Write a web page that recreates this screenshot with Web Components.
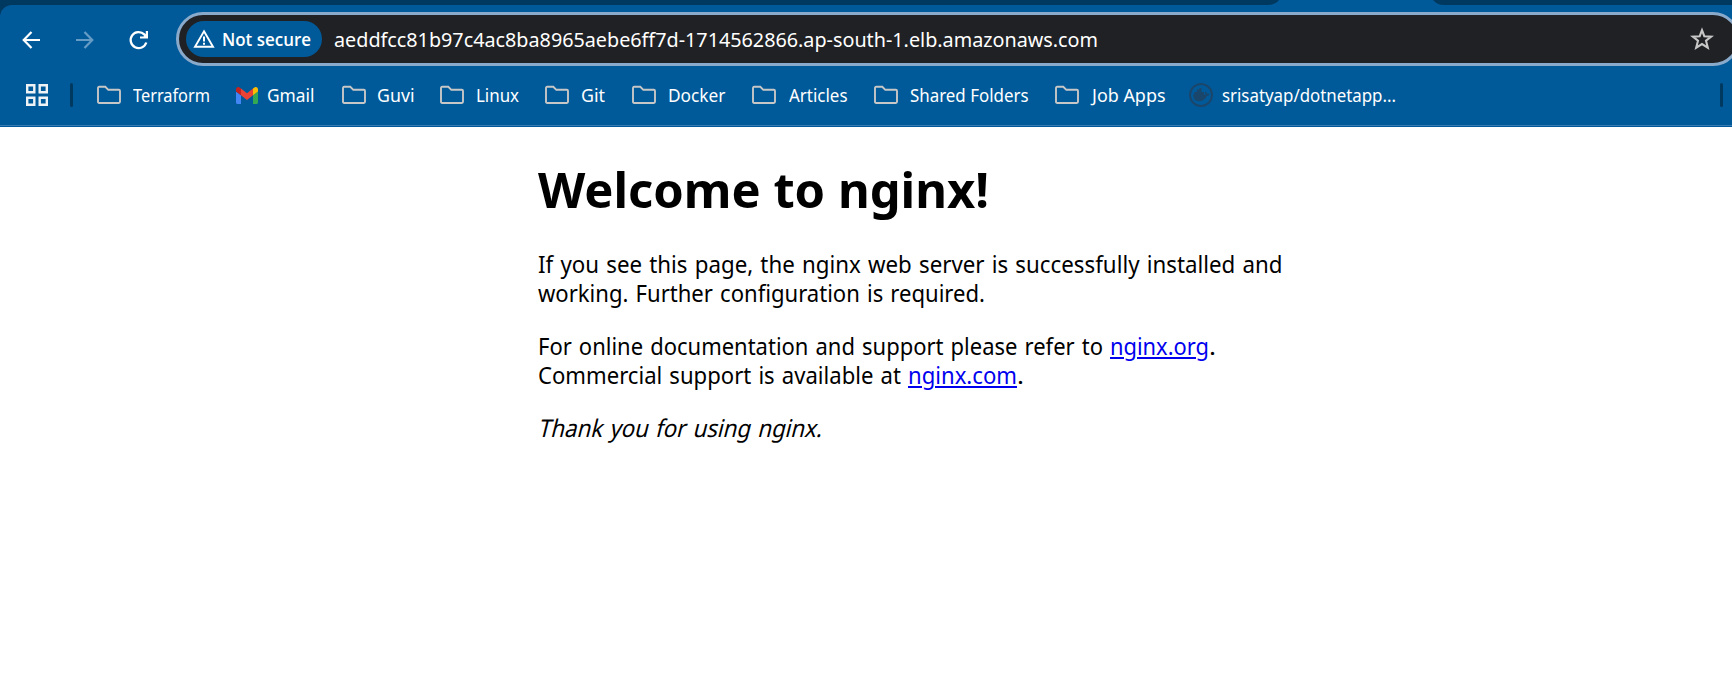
<!DOCTYPE html>
<html lang="en">
<head>
<meta charset="utf-8">
<title>Welcome to nginx!</title>
<style>
html,body{margin:0;padding:0;background:#fff}
body{width:1732px;height:681px;overflow:hidden}
</style>
</head>
<body>
<browser-window></browser-window>
<script>
// Text run scaled horizontally so that it occupies a given advance width.
class FitText extends HTMLElement {
  constructor(){
    super();
    this.attachShadow({mode:'open'}).innerHTML = '<style>:host{display:inline-block;white-space:pre;line-height:inherit}span{display:inline-block;transform-origin:0 77%;text-decoration:var(--line,none);text-decoration-thickness:2px;text-underline-offset:2px}</style><span><slot></slot></span>';
  }
  connectedCallback(){
    const target = parseFloat(this.getAttribute('w'));
    const span = this.shadowRoot.querySelector('span');
    const w = span.getBoundingClientRect().width;
    const skew = this.hasAttribute('slant') ? 'skewX(-' + this.getAttribute('slant') + 'deg) ' : '';
    if (w) span.style.transform = skew + 'scaleX(' + (target / w).toFixed(5) + ')';
    this.style.width = target + 'px';
  }
}

class TabStrip extends HTMLElement {
  constructor(){
    super();
    this.attachShadow({mode:'open'}).innerHTML = `
<style>:host{display:flex;height:5px;background:#005a9a;justify-content:space-between}
svg{display:block}</style>
<svg width="1280" height="5"><path d="M0 0H1279Q1275 5 1268 5H0Z" fill="#00395f"/></svg>
<svg width="300" height="5"><path d="M1 0H300V5H12Q5 5 1 0Z" fill="#00395f"/></svg>`;
  }
}

class NavBar extends HTMLElement {
  constructor(){
    super();
    this.attachShadow({mode:'open'}).innerHTML = `
<style>
:host{display:flex;height:61px;background:linear-gradient(#00395f,#00395f) 0 0/12px 12px no-repeat}
.in{display:flex;flex:1;background:#005a9a;border-radius:12px 0 0 0;min-width:0}
.nav{display:flex;width:176px;padding-top:21px;box-sizing:border-box;flex:none}
svg{display:block;flex:none}
.nav svg:nth-child(1){margin-left:16px}
.nav svg:nth-child(n+2){margin-left:24px}
.pill{flex:none;width:1564px;height:54px;margin-top:7px;box-sizing:border-box;border:3px solid #8aaacb;border-radius:27px;background:#202124;display:flex;align-items:center;padding-left:6.5px}
.chip{width:136.5px;height:36px;border-radius:18px;background:#005a9a;display:flex;align-items:center;box-sizing:border-box;padding-left:7px;color:#fff;font:600 17.7px/36px "Open Sans",sans-serif}
.chip fit-text{margin-left:7px}
.url{color:#fff;font:20.7px/48px "Noto Sans",sans-serif;margin-left:11.5px}
.star{margin-left:592px}
</style>
<div class="in">
<div class="nav">
<svg width="30" height="30" viewBox="0 0 30 30" fill="none" stroke="#fff" stroke-width="2.2"><path d="M24 14H8M15.500 5.900L7.700 14L15.500 22.100"/></svg>
<svg width="30" height="30" viewBox="0 0 30 30" fill="none" stroke="#659cc5" stroke-width="2.2"><path d="M6 14H22M14.500 5.900L22.300 14L14.500 22.100"/></svg>
<svg width="30" height="30" viewBox="0 0 30 30" fill="none" stroke="#fff" stroke-width="2.3"><path d="M22.300 16.500A8 8 0 1 1 20.300 8.400L22 10.300"/><path d="M24 5V12.500H16V10.500H19.500L21.800 8.200V5Z" fill="#fff" stroke="none"/></svg>
</div>
<div class="pill">
<div class="chip"><svg width="22" height="20" viewBox="0 0 22 20"><path d="M11 2.300L20 17.700H2Z" fill="none" stroke="#fff" stroke-width="1.9"/><path d="M10 7.500h2v5h-2zM10 13.700h2v2h-2z" fill="#fff"/></svg><fit-text w="89">Not secure</fit-text></div>
<div class="url"><fit-text w="764">aeddfcc81b97c4ac8ba8965aebe6ff7d-1714562866.ap-south-1.elb.amazonaws.com</fit-text></div>
<svg class="star" width="24" height="24" viewBox="0 0 24 24"><path d="M12 3.200L14.300 9.200L21.200 9.600L16 13.700L17.800 20.600L12 17L6.200 20.600L8 13.700L2.800 9.600L9.700 9.200Z" fill="none" stroke="#c7c7c7" stroke-width="2.1"/></svg>
</div></div>`;
  }
}

const ICONS = {
  folder: '<svg width="24" height="20" viewBox="0 0 24 20"><path d="M1 16.800V3Q1 1.800 2.200 1.800H8.300L11.300 4.800H21.800Q23 4.800 23 6V16.800Q23 18 21.800 18H2.200Q1 18 1 16.800Z" fill="none" stroke="#c7c7c7" stroke-width="1.9"/></svg>',
  gmail: '<svg width="22" height="17" viewBox="52 42 88 66" preserveAspectRatio="none"><path fill="#4285f4" d="M58 108h14V74L52 59v43c0 3.320 2.690 6 6 6"/><path fill="#34a853" d="M120 108h14c3.320 0 6-2.690 6-6V59l-20 15"/><path fill="#fbbc04" d="M120 48v26l20-15v-8c0-7.420-8.470-11.650-14.400-7.200"/><path fill="#ea4335" d="M72 74V48l24 18 24-18v26L96 92"/><path fill="#c5221f" d="M52 51v8l20 15V48l-5.600-4.200c-5.940-4.450-14.400-.22-14.400 7.200"/></svg>',
  docker: '<svg width="24" height="24" viewBox="0 0 24 24"><circle cx="12" cy="12" r="11" fill="none" stroke="#1b466b" stroke-width="2"/><path fill="#1b466b" d="M4 11.500H16.400Q16.500 10.200 15.700 9.300L16.600 8.400Q18 9.500 18 10.700Q19.600 10.400 20.600 11.200Q19.800 12.900 17.800 12.900Q15.500 18.300 10 18.300Q4.300 18.300 4 11.500ZM5.300 8.900H15V11.700H5.300zM7.800 6.500h4.700v2.400H7.800zM10.300 5h2.200v1.500h-2.200z"/></svg>'
};

class BookmarkItem extends HTMLElement {
  connectedCallback(){
    if (this.shadowRoot) return;
    const a = n => this.getAttribute(n);
    this.attachShadow({mode:'open'}).innerHTML = `
<style>:host{display:flex;flex:none;align-items:center;height:36px;box-sizing:border-box;color:#fff;font:17.6px/36px "Noto Sans",sans-serif}
svg{display:block;flex:none}</style>${ICONS[a('icon')]}<fit-text w="${a('w')}">${a('label')}</fit-text>`;
    this.shadowRoot.querySelector('fit-text').style.marginLeft = a('gap') + 'px';
  }
}

// label, icon, left edge, text start, text width
const BOOKMARKS = [
  ['Terraform','folder',97,133,77],
  ['Gmail','gmail',236,267.200,47.500],
  ['Guvi','folder',342,376.700,37.500],
  ['Linux','folder',440,476,43],
  ['Git','folder',545,581,24],
  ['Docker','folder',632,668,57.500],
  ['Articles','folder',752,789,58.500],
  ['Shared Folders','folder',874,910,118.500],
  ['Job Apps','folder',1055,1092,73.500],
  ['srisatyap/dotnetapp...','docker',1189,1222,174]
];

class BookmarksBar extends HTMLElement {
  constructor(){
    super();
    let x = 73, items = '';
    for (const [label, icon, left, text, w] of BOOKMARKS) {
      const iw = icon === 'gmail' ? 22 : 24;
      items += `<bookmark-item icon="${icon}" label="${label}" w="${w}" gap="${text-left-iw}" style="margin-left:${left-x}px"></bookmark-item>`;
      x = text + w;
    }
    this.attachShadow({mode:'open'}).innerHTML = `
<style>:host{display:flex;height:61px;box-sizing:border-box;background:#005a9a;align-items:flex-start;padding-top:11px;background-image:linear-gradient(#3a7cb2,#3a7cb2);background-size:100% 1px;background-position:0 59px;background-repeat:no-repeat}
.apps{margin:6px 0 0 26px;display:block;flex:none}
.sep{width:3px;height:24px;border-radius:1.5px;background:#00395f;margin-top:6px;flex:none}
.end{margin-left:auto;margin-right:9px}</style>
<svg class="apps" width="22" height="24" viewBox="0 0 22 24" fill="none" stroke="#f0f3f6" stroke-width="2.4"><path d="M1.200 2.200h7.100v7.100H1.200zM13.700 2.200h7.100v7.100h-7.100zM1.200 14.700h7.100v7.100H1.200zM13.700 14.700h7.100v7.100h-7.100z"/></svg>
<span class="sep" style="margin-left:22px"></span>${items}<span class="sep end"></span>`;
  }
}

class NginxPage extends HTMLElement {
  constructor(){
    super();
    this.attachShadow({mode:'open'}).innerHTML = `
<style>:host{display:block;padding-left:538px;color:#000;font:24.400px/29px "Noto Sans",sans-serif;word-spacing:1.5px}
h1{font-weight:700;font-size:49px;line-height:58px;margin:0;padding-top:33px;word-spacing:0}
p{margin:0 0 24px;white-space:nowrap;height:58px}
h1+p{margin-top:31px}
.l{display:flex;height:29px}
a{color:#00e;display:block;--line:underline}
</style>
<h1><fit-text w="451">Welcome to nginx!</fit-text></h1>
<p><span class="l"><fit-text w="744.500">If you see this page, the nginx web server is successfully installed and</fit-text></span><span class="l"><fit-text w="447">working. Further configuration is required.</fit-text></span></p>
<p><span class="l"><fit-text w="572">For online documentation and support please refer to </fit-text><a><fit-text w="99">nginx.org</fit-text></a><fit-text w="7">.</fit-text></span><span class="l"><fit-text w="370">Commercial support is available at </fit-text><a><fit-text w="109">nginx.com</fit-text></a><fit-text w="7">.</fit-text></span></p>
<p><fit-text slant="14" w="284">Thank you for using nginx.</fit-text></p>`;
  }
}

class BrowserWindow extends HTMLElement {
  constructor(){
    super();
    this.attachShadow({mode:'open'}).innerHTML = `
<style>:host{display:flex;flex-direction:column;width:1732px;height:681px;overflow:hidden;background:#fff}
:host>*{flex:none}</style>
<tab-strip></tab-strip><nav-bar></nav-bar><bookmarks-bar></bookmarks-bar><nginx-page></nginx-page>`;
  }
}
customElements.define('tab-strip', TabStrip);
customElements.define('nav-bar', NavBar);
customElements.define('bookmark-item', BookmarkItem);
customElements.define('bookmarks-bar', BookmarksBar);
customElements.define('nginx-page', NginxPage);
customElements.define('browser-window', BrowserWindow);
customElements.define('fit-text', FitText);
</script>
</body>
</html>
